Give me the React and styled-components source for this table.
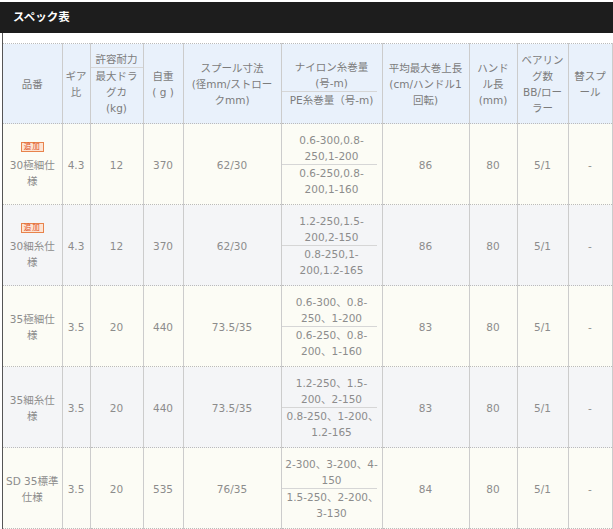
import React from 'react';
import styled, { createGlobalStyle } from 'styled-components';

const GlobalStyle = createGlobalStyle`
    body {
        margin: 0;
        background: #fff;
        font-family: "DejaVu Sans", "Noto Sans CJK JP", sans-serif;
    }
`

const widths = [59, 28, 53, 40, 98, 101, 87, 48, 51, 44];

const rows = [
    { badge: true, name: ['30極細仕', '様'], gear: '4.3', drag: '12', weight: '370', spool: '62/30',
      nylon: ['0.6-300,0.8-', '250,1-200'], pe: ['0.6-250,0.8-', '200,1-160'], retrieve: '86', handle: '80', bearing: '5/1', spare: '-' },
    { badge: true, name: ['30細糸仕', '様'], gear: '4.3', drag: '12', weight: '370', spool: '62/30',
      nylon: ['1.2-250,1.5-', '200,2-150'], pe: ['0.8-250,1-', '200,1.2-165'], retrieve: '86', handle: '80', bearing: '5/1', spare: '-' },
    { name: ['35極細仕', '様'], gear: '3.5', drag: '20', weight: '440', spool: '73.5/35',
      nylon: ['0.6-300、0.8-', '250、1-200'], pe: ['0.6-250、0.8-', '200、1-160'], retrieve: '83', handle: '80', bearing: '5/1', spare: '-' },
    { name: ['35細糸仕', '様'], gear: '3.5', drag: '20', weight: '440', spool: '73.5/35',
      nylon: ['1.2-250、1.5-', '200、2-150'], pe: ['0.8-250、1-200、', '1.2-165'], retrieve: '83', handle: '80', bearing: '5/1', spare: '-' },
    { name: ['SD 35標準', '仕様'], gear: '3.5', drag: '20', weight: '535', spool: '76/35',
      nylon: ['2-300、3-200、4-', '150'], pe: ['1.5-250、2-200、', '3-130'], retrieve: '84', handle: '80', bearing: '5/1', spare: '-' },
];

const Lines = ({lines}) => lines.map((l, i) => <Line key={i}>{l}</Line>);

export default function App() {
    return (
        <Wrap>
            <GlobalStyle />
            <TitleBar>スペック表</TitleBar>
            <Body>
                <Table>
                    <colgroup>
                        {widths.map((w, i) => <col key={i} style={{width: w}} />)}
                    </colgroup>
                    <thead>
                        <tr>
                            <Th><Lines lines={['品番']} /></Th>
                            <Th><Lines lines={['ギア', '比']} /></Th>
                            <Th>
                                <Line>許容耐力</Line>
                                <Split $full>
                                    <Lines lines={['最大ドラ', 'グカ', '(kg)']} />
                                </Split>
                            </Th>
                            <Th><Lines lines={['自重', '( g )']} /></Th>
                            <Th><Lines lines={['スプール寸法', '(径mm/ストロー', 'クmm)']} /></Th>
                            <Th>
                                <Lines lines={['ナイロン糸巻量', '(号-m)']} />
                                <Split><Line>PE糸巻量（号-m)</Line></Split>
                            </Th>
                            <Th><Lines lines={['平均最大巻上長', '(cm/ハンドル1', '回転)']} /></Th>
                            <Th><Lines lines={['ハンド', 'ル長', '(mm)']} /></Th>
                            <Th><Lines lines={['ベアリン', 'グ数', 'BB/ロー', 'ラー']} /></Th>
                            <Th><Lines lines={['替スプ', 'ール']} /></Th>
                        </tr>
                    </thead>
                    <tbody>
                        {rows.map((r, i) => (
                            <tr key={i}>
                                <Td $alt={i % 2 === 1}>
                                    {r.badge && <BadgeRow><Badge>追加</Badge></BadgeRow>}
                                    <Lines lines={r.name} />
                                </Td>
                                <Td $alt={i % 2 === 1}>{r.gear}</Td>
                                <Td $alt={i % 2 === 1}>{r.drag}</Td>
                                <Td $alt={i % 2 === 1}>{r.weight}</Td>
                                <Td $alt={i % 2 === 1}>{r.spool}</Td>
                                <Td $alt={i % 2 === 1}>
                                    <Lines lines={r.nylon} />
                                    <Split><Lines lines={r.pe} /></Split>
                                </Td>
                                <Td $alt={i % 2 === 1}>{r.retrieve}</Td>
                                <Td $alt={i % 2 === 1}>{r.handle}</Td>
                                <Td $alt={i % 2 === 1}>{r.bearing}</Td>
                                <Td $alt={i % 2 === 1}>{r.spare}</Td>
                            </tr>
                        ))}
                    </tbody>
                </Table>
            </Body>
        </Wrap>
    )
}

const Wrap = styled.div`
    padding-top: 2px;
    width: 613px;
`
const TitleBar = styled.div`
    height: 31px;
    background: #1d1d1d;
    color: #fff;
    font-weight: 700;
    font-size: 11.5px;
    line-height: 31px;
    padding-left: 13px;
    box-sizing: border-box;
`
const Body = styled.div`
    margin-left: 2px;
    border-left: 1px solid #555;
    padding-top: 10px;
`
const Table = styled.table`
    width: 609px;
    border-collapse: collapse;
    table-layout: fixed;
    font-size: 10.5px;
    text-align: center;
`
const Cell = `
    border-left: 1px solid #ccc;
    border-top: 1px dotted #bbb;
    border-bottom: 1px dotted #bbb;
    padding: 7px 3px;
    vertical-align: middle;
    line-height: 16px;
    &:first-child {
        border-left: none;
    }
    &:last-child {
        border-right: 1px solid #ccc;
    }
`
const Th = styled.th`
    ${Cell}
    background: #e9f1fb;
    font-weight: normal;
    color: #7c7c7c;
`
const Td = styled.td`
    ${Cell}
    padding: 8px 3px 7px;
    background: ${props => props.$alt ? '#f4f5f7' : '#fcfcf5'};
    color: #8c8c8c;
`
const Line = styled.div`
    white-space: nowrap;
    line-height: 16px;
`
const Split = styled.div`
    border-top: 1px solid #d6d6d6;
    margin: ${props => props.$full ? '0 -3px' : '0 2px 0 -3px'};
    padding: ${props => props.$full ? '0 3px' : '0 0 0 5px'};
`
const BadgeRow = styled.div`
    line-height: 10px;
    margin-bottom: 5px;
`
const Badge = styled.span`
    display: inline-block;
    font-size: 7.5px;
    line-height: 8px;
    padding: 0 2px;
    letter-spacing: 1px;
    border: 1px solid #e8834c;
    background: #fde4d3;
    color: #dd4f25;
`
